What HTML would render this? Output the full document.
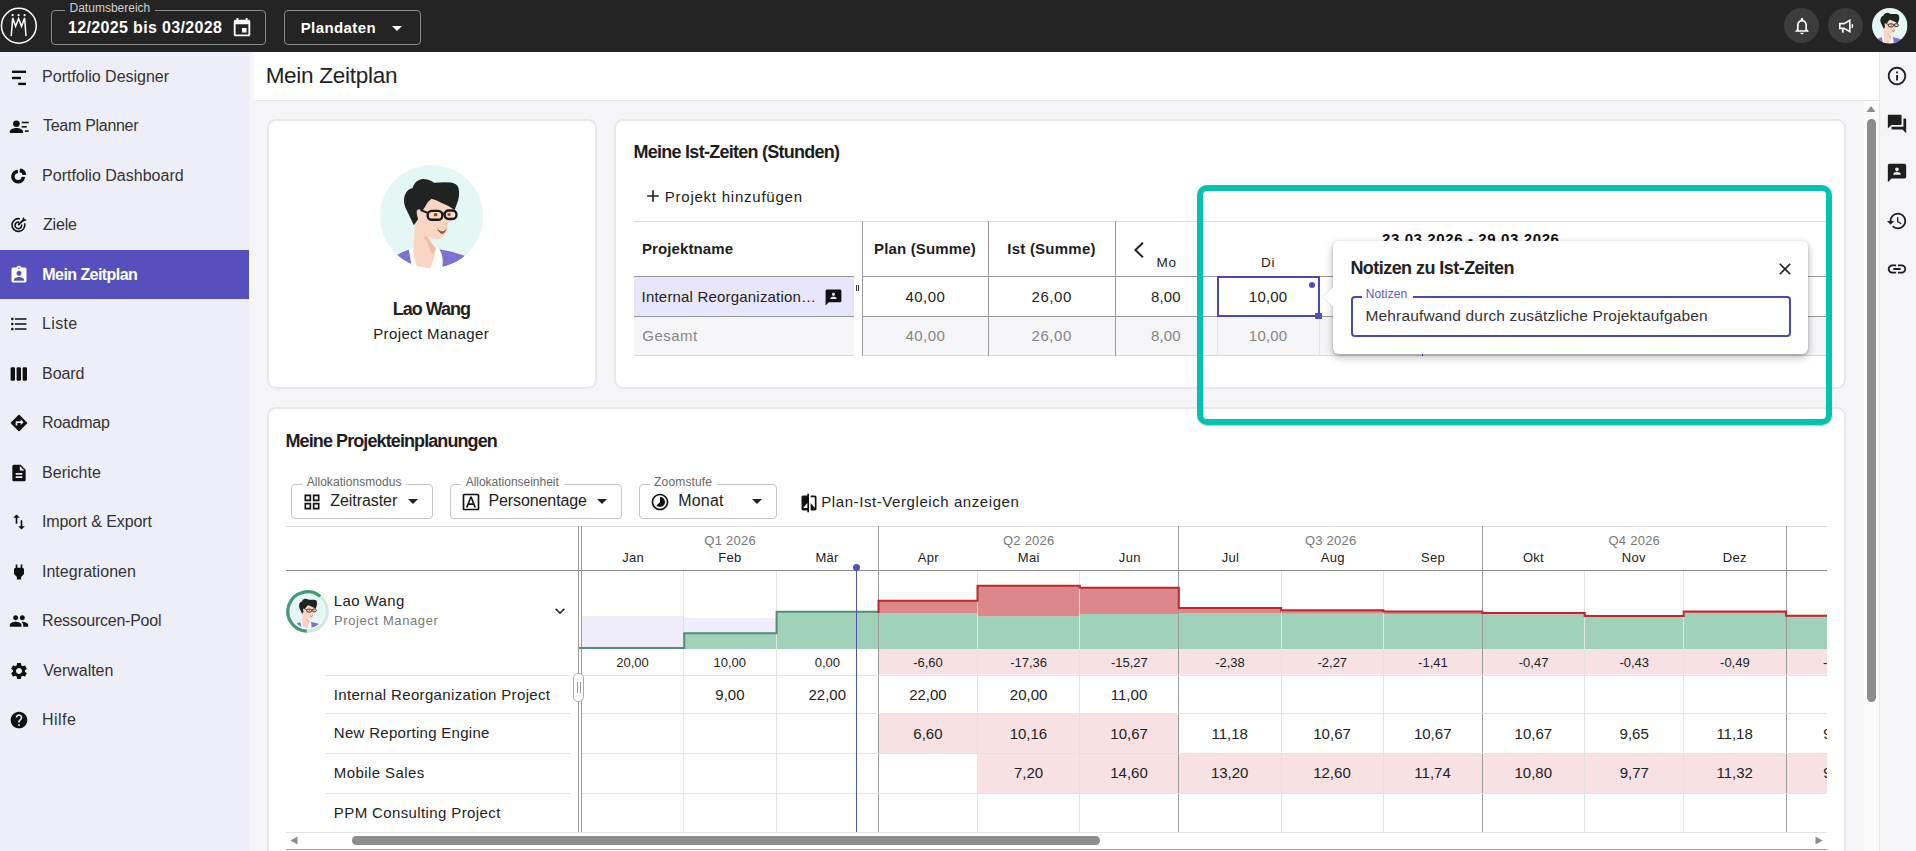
<!DOCTYPE html>
<html lang="de"><head><meta charset="utf-8"><title>Mein Zeitplan</title>
<style>
*{box-sizing:border-box}
html,body{margin:0;padding:0}
body{width:1916px;height:851px;overflow:hidden;position:relative;background:#f5f5f7;font-family:"Liberation Sans",sans-serif;color:#222}
.t{position:absolute;white-space:pre;line-height:1;font-weight:400;margin:0;padding:0;text-decoration:none}
.i{position:absolute;display:block;overflow:visible}
.abs{position:absolute}
#top{position:absolute;left:0;top:0;width:1916px;height:52px;background:#242424}
#side{position:absolute;left:0;top:52px;width:249px;height:799px;background:#eeeef9}
.act{position:absolute;left:0;width:249px;background:#5650be}
#hdr{position:absolute;left:249px;top:52px;width:1630px;height:48px;background:#fff}
#rbar{position:absolute;left:1879px;top:52px;width:37px;height:799px;background:#f5f5f7;border-left:1px solid #e6e6ea}
.card{position:absolute;background:#fff;border:2px solid #e8e8ea;border-radius:9px}
.ob{position:absolute;border:1px solid #8a8a8a;border-radius:4px}
.lb{position:absolute;border:1px solid #c4c4c4;border-radius:4px;background:#fff}
.hl{position:absolute;height:1px}
.vl{position:absolute;width:1px}
</style></head><body>

<svg width="0" height="0" style="position:absolute"><defs>
<clipPath id="avc"><circle cx="50" cy="50" r="50"/></clipPath>
<symbol id="av" viewBox="0 0 100 100">
<g clip-path="url(#avc)">
<rect width="100" height="100" fill="#e5f7f5"/>
<path d="M12 92 L16 87.500 Q22 84 28.500 82 L33 100 L12 100Z" fill="#7b72d3"/>
<path d="M56.500 81.500 Q70 83.500 83 88.500 L88 100 L58 100Z" fill="#7b72d3"/>
<path d="M28 82 L33.500 80.500 L36 100 L31 100Z" fill="#fff"/>
<path d="M53 80 L57.500 81.500 Q62 88 60.500 100 L47 100Z" fill="#fff"/>
<path d="M35 44 L33.500 66 L32.400 82 Q33 94 37 100 L49.500 100 Q52.500 90 54.600 81 Q50 76 46.500 70Z" fill="#f9d5c3"/>
<path d="M45 69 Q49 75.500 54.200 81 Q52.500 84 50.500 87 Q47.500 78 43 70Z" fill="#f4b9a3"/>
<path d="M40 38 Q48 31 52 33 Q62 37 71.500 42.800 L71.800 47 Q70.500 51 69.800 52.600 L67.500 55 Q66.300 56.500 65.200 57.200 L66 59 L65 62 Q64 68 60 71 Q54 73.500 47 69.600 Q40 64 36 56 L35 46Z" fill="#f9d5c3"/>
<path d="M55.500 61.500 Q60 63.500 64.800 61.500 Q63.500 66 60.500 67 Q57 66 55.500 61.500Z" fill="#a94a1c"/>
<path d="M55.500 61.500 Q60 63.500 64.800 61.500 Q62.500 64.600 60 64.400 Q57.500 64 55.500 61.500Z" fill="#fff"/>
<path d="M65.200 57.200 Q63.500 57.800 62.800 56.800" fill="none" stroke="#d99a84" stroke-width=".8"/>
<path d="M32.800 58.500 Q28 48 24.500 41 Q21.500 33 25.500 26.500 Q28.500 22.500 31.500 22.500 Q33.500 15.500 40 13.800 Q46 12.800 52.500 17.200 Q62 16.500 69 17 Q74.500 18 76.200 22 Q78 30 74.500 38 L72.500 43.600 Q66 39 60 36.800 Q54 33.500 50 32.800 Q45.500 36 44 40 Q42 44 39.800 44.200 Q37.500 41.500 35.600 44.500 Q35.500 49 37 52.500 Q35 56 32.800 58.500Z" fill="#1f2423"/>
<g fill="none" stroke="#1a1a1a" stroke-width="2.300">
<rect x="46.300" y="44.600" width="14.200" height="8.600" rx="4"/>
<rect x="62.800" y="44.200" width="11.400" height="8.200" rx="3.800"/>
<path d="M60.500 47h2.300M46.500 46.500 L39.500 43.800" stroke-width="2"/>
</g>
<ellipse cx="54" cy="48.200" rx="1.800" ry="1.500" fill="#8a4a20"/><ellipse cx="67" cy="48" rx="1.600" ry="1.400" fill="#8a4a20"/>
</g>
</symbol></defs></svg>

<header id="top">
<svg class="i" style="left:0;top:7px" width="38" height="38" viewBox="0 0 38 38"><circle cx="18.850" cy="18.750" r="17.400" fill="none" stroke="#fff" stroke-width="1.500"/>
<path d="M11.200 29.100 L12.700 10.900 L15.600 19.300 L18.600 11.600 L21.500 19.300 L24.600 10.900 L26 29.100" fill="none" stroke="#fff" stroke-width="1.500" stroke-linejoin="miter"/>
<circle cx="12.600" cy="8.200" r="1.100" fill="#fff"/><circle cx="18.600" cy="8.200" r="1.100" fill="#fff"/><circle cx="24.600" cy="8.200" r="1.100" fill="#fff"/></svg>
<div class="ob" style="left:51px;top:10px;width:215px;height:35px"></div>
<div class="abs" style="left:65px;top:2px;width:90px;height:14px;background:#242424"></div>
<span class="t" style="left:69.52px;top:2px;font-size:12px;color:#d0d0d0;letter-spacing:0.005px;">Datumsbereich</span>
<span class="t" style="left:67.99px;top:20px;font-size:16px;color:#fff;font-weight:700;letter-spacing:0.351px;">12/2025 bis 03/2028</span>
<svg class="i" style="left:231.00px;top:17.00px" width="22" height="22" viewBox="0 0 24 24" fill="#fff" ><path d="M17 12h-5v5h5v-5zM16 1v2H8V1H6v2H5c-1.110 0-1.990.9-1.990 2L3 19c0 1.100.89 2 2 2h14c1.100 0 2-.9 2-2V5c0-1.100-.9-2-2-2h-1V1h-2zm3 18H5V8h14v11z"/></svg>
<div class="ob" style="left:284px;top:10px;width:137px;height:35px"></div>
<span class="t" style="left:300.70px;top:20px;font-size:15px;color:#fff;font-weight:700;letter-spacing:0.406px;">Plandaten</span>
<svg class="i" style="left:385.00px;top:15.60px" width="24" height="24" viewBox="0 0 24 24" fill="#fff" ><path d="M7 10l5 5 5-5z"/></svg>
<div class="abs" style="left:1784px;top:8px;width:35px;height:35px;border-radius:50%;background:#3c3c3c"></div>
<svg class="i" style="left:1791.50px;top:15.60px" width="20" height="20" viewBox="0 0 24 24" fill="#fff" ><path d="M12 22c1.100 0 2-.9 2-2h-4c0 1.100.9 2 2 2zm6-6v-5c0-3.070-1.630-5.640-4.500-6.320V4c0-.83-.67-1.500-1.500-1.500s-1.500.67-1.500 1.500v.68C7.640 5.360 6 7.920 6 11v5l-2 2v1h16v-1l-2-2zm-2 1H8v-6c0-2.480 1.510-4.500 4-4.500s4 2.020 4 4.500v6z"/></svg>
<div class="abs" style="left:1828px;top:8px;width:35px;height:35px;border-radius:50%;background:#3c3c3c"></div>
<svg class="i" style="left:1836px;top:16px" width="20" height="20" viewBox="0 0 20 20" fill="none" stroke="#fff" stroke-width="1.600"><path d="M3.800 7.600h4.200l5.800-3.200v11.200l-5.800-3.200H3.800z"/><path d="M6.800 12.600v4" stroke-width="1.800"/><path d="M16 8.200q1 1.800 0 3.600" stroke-width="1.400"/></svg>
<svg class="i" style="left:1872px;top:8px" width="35.500" height="35.500"><use href="#av"/></svg>
</header>
<div id="side"></div>
<nav>
<div class="act" style="top:250px;height:49px"></div>
<a class="ni">
<span class="t" style="left:42.09px;top:69px;font-size:16px;color:#333;letter-spacing:-0.011px;">Portfolio Designer</span>
<svg class="i" style="left:9px;top:67.00px" width="20" height="20" viewBox="0 0 20 20" fill="#111"><rect x="3" y="3.600" width="14" height="2.400"/><rect x="3" y="9.800" width="9" height="2.400"/><rect x="9.200" y="15.700" width="7.800" height="2.400"/></svg>
</a>
<a class="ni">
<span class="t" style="left:43.04px;top:118px;font-size:16px;color:#333;letter-spacing:-0.290px;">Team Planner</span>
<svg class="i" style="left:9px;top:115.66px" width="20" height="20" viewBox="0 0 20 20" fill="#111"><circle cx="7.400" cy="7.700" r="3.300"/><path d="M.800 17v-1.600c0-2.300 4.400-3.400 6.600-3.400s6.600 1.100 6.600 3.400V17z"/><rect x="12.700" y="5.700" width="7" height="1.600"/><rect x="12.700" y="10" width="5" height="1.600"/><rect x="15.900" y="14.300" width="3.800" height="1.600"/></svg>
</a>
<a class="ni">
<span class="t" style="left:42.09px;top:168px;font-size:16px;color:#333;letter-spacing:0.007px;">Portfolio Dashboard</span>
<svg class="i" style="left:9px;top:165.92px" width="20" height="20" viewBox="0 0 20 20" fill="none" stroke="#111" stroke-width="3.500"><path d="M14.29 10.87 A5.200 5.200 0 1 1 8.92 5.40"/><path d="M10.79 4.28 A5.200 5.200 0 0 1 15.42 8.91" stroke-width="3.800"/></svg>
</a>
<a class="ni">
<span class="t" style="left:42.89px;top:217px;font-size:16px;color:#333;letter-spacing:-0.140px;">Ziele</span>
<svg class="i" style="left:9px;top:215.38px" width="20" height="20" viewBox="0 0 20 20" fill="none" stroke="#111" stroke-width="1.600"><path d="M15.600 8.300a6.400 6.400 0 1 1-4.600-4.500"/><path d="M12.500 9.400a3.300 3.300 0 1 1-2.300-2.200"/><path d="M9.700 9.600l4.400-4.400" stroke-width="1.700"/><circle cx="9.700" cy="9.600" r="1" fill="#111" stroke="none"/><path d="M13.300 6.400 L14.400 2.600 L15.300 4.500 L17.200 5 Z" fill="#111" stroke-width=".8"/></svg>
</a>
<a class="ni">
<span class="t" style="left:42.33px;top:267px;font-size:16px;color:#fff;font-weight:700;letter-spacing:-0.564px;">Mein Zeitplan</span>
<svg class="i" style="left:9.00px;top:264.84px" width="20" height="20" viewBox="0 0 24 24" fill="#fff" ><path d="M19 3h-4.180C14.400 1.840 13.300 1 12 1c-1.300 0-2.400.84-2.820 2H5c-1.100 0-2 .9-2 2v14c0 1.100.9 2 2 2h14c1.100 0 2-.9 2-2V5c0-1.100-.9-2-2-2zm-7 0c.55 0 1 .45 1 1s-.45 1-1 1-1-.45-1-1 .45-1 1-1zm0 4c1.660 0 3 1.340 3 3s-1.340 3-3 3-3-1.340-3-3 1.340-3 3-3zm6 12H6v-1.400c0-2 4-3.100 6-3.100s6 1.100 6 3.100V19z"/></svg>
</a>
<a class="ni">
<span class="t" style="left:42.09px;top:316px;font-size:16px;color:#333;letter-spacing:0.307px;">Liste</span>
<svg class="i" style="left:9.00px;top:314.30px" width="20" height="20" viewBox="0 0 24 24" fill="#111" ><path d="M4 10.5c-.83 0-1.5.67-1.5 1.5s.67 1.5 1.5 1.5 1.5-.67 1.5-1.5-.67-1.5-1.5-1.5zm0-6c-.83 0-1.5.67-1.5 1.5S3.17 7.5 4 7.5 5.5 6.83 5.5 6 4.83 4.5 4 4.500zm0 12c-.83 0-1.5.68-1.5 1.5s.68 1.5 1.5 1.5 1.5-.68 1.5-1.500-.67-1.500-1.500-1.500zM7 19h14v-2H7v2zm0-6h14v-2H7v2zm0-8v2h14V5H7z"/></svg>
</a>
<a class="ni">
<span class="t" style="left:42.09px;top:366px;font-size:16px;color:#333;letter-spacing:-0.088px;">Board</span>
<svg class="i" style="left:9px;top:363.76px" width="20" height="20" viewBox="0 0 20 20" fill="#111"><rect x="1.600" y="3.300" width="4.400" height="13.400" rx="1.300"/><rect x="7.600" y="3.300" width="4.400" height="13.400" rx="1.300"/><rect x="13.600" y="3.300" width="4.400" height="13.400" rx="1.300"/></svg>
</a>
<a class="ni">
<span class="t" style="left:42.09px;top:415px;font-size:16px;color:#333;letter-spacing:-0.265px;">Roadmap</span>
<svg class="i" style="left:9.00px;top:413.22px" width="20" height="20" viewBox="0 0 24 24" fill="#111" ><path d="M21.71 11.29l-9-9c-.39-.39-1.02-.39-1.41 0l-9 9c-.39.39-.39 1.02 0 1.410l9 9c.39.39 1.020.39 1.410 0l9-9c.39-.38.39-1.010 0-1.410zM14 14.500V12h-4v3H8v-4c0-.55.45-1 1-1h5V7.500l3.500 3.500-3.500 3.500z"/></svg>
</a>
<a class="ni">
<span class="t" style="left:42.09px;top:465px;font-size:16px;color:#333;letter-spacing:0.018px;">Berichte</span>
<svg class="i" style="left:9.00px;top:462.68px" width="20" height="20" viewBox="0 0 24 24" fill="#111" ><path d="M14 2H6c-1.100 0-1.990.9-1.990 2L4 20c0 1.100.89 2 1.990 2H18c1.100 0 2-.9 2-2V8l-6-6zm2 16H8v-2h8v2zm0-4H8v-2h8v2zm-3-5V3.500L18.500 9H13z"/></svg>
</a>
<a class="ni">
<span class="t" style="left:41.92px;top:514px;font-size:16px;color:#333;letter-spacing:-0.075px;">Import &amp; Export</span>
<svg class="i" style="left:9.00px;top:512.14px" width="20" height="20" viewBox="0 0 24 24" fill="#111" ><path d="M9 3L5 6.990h3V14h2V6.990h3L9 3zm7 14.010V10h-2v7.010h-3L15 21l4-3.990h-3z"/></svg>
</a>
<a class="ni">
<span class="t" style="left:41.92px;top:564px;font-size:16px;color:#333;letter-spacing:0.051px;">Integrationen</span>
<svg class="i" style="left:9.00px;top:561.60px" width="20" height="20" viewBox="0 0 24 24" fill="#111" ><path d="M16.010 7L16 3h-2v4h-4V3H8v4h-.010C7 6.990 6 7.990 6 8.990v5.490L9.500 18v3h5v-3l3.500-3.510v-5.500c0-1-1-2-1.990-1.990z"/></svg>
</a>
<a class="ni">
<span class="t" style="left:42.09px;top:613px;font-size:16px;color:#333;letter-spacing:-0.239px;">Ressourcen-Pool</span>
<svg class="i" style="left:9.00px;top:611.06px" width="20" height="20" viewBox="0 0 24 24" fill="#111" ><path d="M16 11c1.660 0 2.990-1.340 2.990-3S17.660 5 16 5c-1.660 0-3 1.340-3 3s1.340 3 3 3zm-8 0c1.660 0 2.990-1.340 2.990-3S9.660 5 8 5C6.340 5 5 6.340 5 8s1.340 3 3 3zm0 2c-2.330 0-7 1.170-7 3.500V19h14v-2.500c0-2.330-4.670-3.500-7-3.500zm8 0c-.29 0-.62.020-.97.050 1.160.84 1.970 1.970 1.970 3.450V19h6v-2.500c0-2.330-4.670-3.500-7-3.500z"/></svg>
</a>
<a class="ni">
<span class="t" style="left:43.33px;top:663px;font-size:16px;color:#333;letter-spacing:-0.032px;">Verwalten</span>
<svg class="i" style="left:9.00px;top:660.52px" width="20" height="20" viewBox="0 0 24 24" fill="#111" ><path d="M19.140 12.940c.040-.3.060-.61.060-.94 0-.32-.020-.64-.070-.94l2.030-1.580c.18-.14.230-.41.120-.61l-1.920-3.320c-.12-.22-.37-.29-.59-.22l-2.390.96c-.5-.38-1.030-.7-1.620-.94l-.36-2.540c-.04-.24-.24-.41-.48-.41h-3.840c-.24 0-.43.170-.47.410l-.36 2.540c-.59.240-1.130.570-1.620.940l-2.390-.96c-.22-.08-.47 0-.59.220L2.740 8.870c-.12.210-.08.470.12.610l2.030 1.580c-.05.3-.09.630-.09.940s.02.640.07.940l-2.030 1.580c-.18.140-.23.410-.12.610l1.920 3.320c.12.220.37.290.59.220l2.390-.96c.5.380 1.030.7 1.620.94l.36 2.540c.05.240.24.410.48.410h3.840c.24 0 .44-.17.470-.41l.36-2.540c.59-.24 1.130-.56 1.620-.94l2.390.96c.22.080.47 0 .59-.22l1.920-3.320c.12-.22.070-.47-.12-.61l-2.010-1.580zM12 15.600c-1.980 0-3.600-1.620-3.600-3.600s1.620-3.600 3.600-3.600 3.600 1.620 3.600 3.600-1.620 3.600-3.600 3.600z"/></svg>
</a>
<a class="ni">
<span class="t" style="left:42.09px;top:712px;font-size:16px;color:#333;letter-spacing:0.454px;">Hilfe</span>
<svg class="i" style="left:9.00px;top:709.98px" width="20" height="20" viewBox="0 0 24 24" fill="#111" ><path d="M12 2C6.480 2 2 6.480 2 12s4.480 10 10 10 10-4.480 10-10S17.520 2 12 2zm1 17h-2v-2h2v2zm2.070-7.750l-.9.920C13.450 12.900 13 13.500 13 15h-2v-.5c0-1.100.45-2.100 1.170-2.830l1.240-1.260c.37-.36.590-.86.590-1.410 0-1.100-.9-2-2-2s-2 .9-2 2H8c0-2.210 1.790-4 4-4s4 1.790 4 4c0 .88-.36 1.680-.93 2.250z"/></svg>
</a>
</nav>
<div id="hdr"></div>
<div class="hl" style="left:256px;top:100px;width:1623px;background:#e4e4e8"></div>
<div class="abs" style="left:249px;top:52px;width:7px;height:48px;background:linear-gradient(90deg,rgba(120,120,160,.10),rgba(120,120,160,0))"></div>
<h1 class="t" style="left:265.65px;top:65px;font-size:22.5px;color:#222;letter-spacing:-0.263px;">Mein Zeitplan</h1>
<div id="rbar"></div>
<aside>
<svg class="i" style="left:1886.00px;top:65.00px" width="22" height="22" viewBox="0 0 24 24" fill="#1f1f1f" ><path d="M11 7h2v2h-2zm0 4h2v6h-2zm1-9C6.480 2 2 6.480 2 12s4.480 10 10 10 10-4.480 10-10S17.520 2 12 2zm0 18c-4.410 0-8-3.590-8-8s3.590-8 8-8 8 3.590 8 8-3.590 8-8 8z"/></svg>
<svg class="i" style="left:1886.00px;top:113.00px" width="22" height="22" viewBox="0 0 24 24" fill="#1f1f1f" ><path d="M21 6h-2v9H6v2c0 .55.45 1 1 1h11l4 4V7c0-.55-.45-1-1-1zm-4 6V3c0-.55-.45-1-1-1H3c-.55 0-1 .45-1 1v14l4-4h10c.55 0 1-.45 1-1z"/></svg>
<svg class="i" style="left:1886.00px;top:161.70px" width="22" height="22" viewBox="0 0 24 24" fill="#1f1f1f" ><path d="M20 2H4.010c-1.100 0-2 .9-2 2L2 22l4-4h14c1.100 0 2-.9 2-2V4c0-1.100-.9-2-2-2zm-8 4c1.100 0 2 .9 2 2s-.9 2-2 2-2-.9-2-2 .9-2 2-2zm4 8H8v-.570c0-.81.48-1.530 1.220-1.850.85-.37 1.790-.58 2.780-.58.990 0 1.930.21 2.780.58.740.32 1.220 1.040 1.220 1.850V14z"/></svg>
<svg class="i" style="left:1885.50px;top:209.50px" width="22" height="22" viewBox="0 0 24 24" fill="#1f1f1f" ><path d="M13 3c-4.970 0-9 4.030-9 9H1l3.890 3.890.07.14L9 12H6c0-3.870 3.130-7 7-7s7 3.130 7 7-3.130 7-7 7c-1.930 0-3.680-.79-4.940-2.060l-1.420 1.420C8.270 19.990 10.510 21 13 21c4.970 0 9-4.030 9-9s-4.030-9-9-9zm-1 5v5l4.280 2.540.72-1.210-3.500-2.080V8H12z"/></svg>
<svg class="i" style="left:1886.00px;top:257.50px" width="22" height="22" viewBox="0 0 24 24" fill="#1f1f1f" ><path d="M3.900 12c0-1.710 1.390-3.100 3.100-3.100h4V7H7c-2.760 0-5 2.240-5 5s2.240 5 5 5h4v-1.900H7c-1.710 0-3.100-1.390-3.100-3.100zM8 13h8v-2H8v2zm9-6h-4v1.900h4c1.710 0 3.100 1.390 3.100 3.100s-1.390 3.100-3.100 3.100h-4V17h4c2.760 0 5-2.240 5-5s-2.240-5-5-5z"/></svg>
</aside>
<div class="abs" style="left:1864px;top:101px;width:15px;height:750px;background:#fafafb"></div>
<svg class="i" style="left:1866px;top:105px" width="10" height="8" viewBox="0 0 10 8"><path d="M5 1 L9.500 7 H.500z" fill="#8c8c8c"/></svg>
<div class="abs" style="left:1866.800px;top:119px;width:8.800px;height:583px;border-radius:4.400px;background:#8c8c8c"></div>
<main>
<section>
<div class="card" style="left:267px;top:119px;width:330px;height:270px"></div>
<svg class="i" style="left:380px;top:164.500px" width="103" height="103"><use href="#av"/></svg>
<h3 class="t" style="left:392.70px;top:300px;font-size:18px;color:#222;font-weight:700;letter-spacing:-1.002px;">Lao Wang</h3>
<span class="t" style="left:373.17px;top:326px;font-size:15px;color:#222;letter-spacing:0.387px;">Project Manager</span>
</section>
<section>
<div class="card" style="left:614px;top:119px;width:1232px;height:270px"></div>
<h2 class="t" style="left:633.50px;top:143px;font-size:18px;color:#1d1d1f;font-weight:700;letter-spacing:-0.736px;">Meine Ist-Zeiten (Stunden)</h2>
<svg class="i" style="left:643.00px;top:186.30px" width="20" height="20" viewBox="0 0 24 24" fill="#222" ><path d="M19 13h-6v6h-2v-6H5v-2h6V5h2v6h6v2z"/></svg>
<span class="t" style="left:664.77px;top:189px;font-size:15px;color:#222;letter-spacing:0.762px;">Projekt hinzufügen</span>
<div class="hl" style="left:634px;top:221px;width:1193px;background:#dcdcdc"></div>
<div class="abs" style="left:634px;top:277px;width:220px;height:39px;background:#e8e6fb"></div>
<div class="abs" style="left:634px;top:317px;width:220px;height:38px;background:#f5f5f7"></div>
<div class="abs" style="left:863px;top:317px;width:964px;height:38px;background:#f5f5f7"></div>
<div class="hl" style="left:634px;top:276px;width:220px;background:#9a9a9a"></div>
<div class="hl" style="left:634px;top:316px;width:220px;background:#9a9a9a"></div>
<div class="hl" style="left:634px;top:355px;width:220px;background:#dcdcdc"></div>
<div class="hl" style="left:862px;top:276px;width:965px;background:#9a9a9a"></div>
<div class="hl" style="left:862px;top:316px;width:965px;background:#9a9a9a"></div>
<div class="hl" style="left:862px;top:355px;width:965px;background:#dcdcdc"></div>
<div class="vl" style="left:862px;top:221px;height:135px;background:#9a9a9a"></div>
<div class="vl" style="left:988px;top:221px;height:135px;background:#9a9a9a"></div>
<div class="vl" style="left:1115px;top:221px;height:135px;background:#9a9a9a"></div>
<div class="vl" style="left:1217px;top:277px;height:78px;background:#e2e2e4"></div>
<div class="vl" style="left:1319px;top:317px;height:38px;background:#e2e2e4"></div>
<div class="abs" style="left:855.500px;top:285px;width:1px;height:6px;background:#333"></div><div class="abs" style="left:857.500px;top:285px;width:1px;height:6px;background:#333"></div>
<span class="t" style="left:642.00px;top:241px;font-size:15px;color:#1d1d1f;font-weight:700;letter-spacing:0.098px;">Projektname</span>
<span class="t" style="left:874.00px;top:241px;font-size:15px;color:#1d1d1f;font-weight:700;letter-spacing:0.157px;">Plan (Summe)</span>
<span class="t" style="left:1007.25px;top:241px;font-size:15px;color:#1d1d1f;font-weight:700;letter-spacing:0.240px;">Ist (Summe)</span>
<svg class="i" style="left:1127px;top:238px" width="24" height="24" viewBox="0 0 24 24" fill="none" stroke="#222" stroke-width="2"><path d="M15.900 4.700 L8.400 12 L15.900 19.300"/></svg>
<span class="t" style="left:1156.39px;top:256px;font-size:13.5px;color:#222;letter-spacing:0.920px;">Mo</span>
<span class="t" style="left:1260.94px;top:256px;font-size:13.5px;color:#222;letter-spacing:0.768px;">Di</span>
<span class="t" style="left:1381.98px;top:231px;font-size:15px;color:#111;font-weight:700;letter-spacing:0.613px;">23.03.2026 - 29.03.2026</span>
<span class="t" style="left:641.62px;top:289px;font-size:15px;color:#222;letter-spacing:0.188px;">Internal Reorganization…</span>
<svg class="i" style="left:824.00px;top:287.50px" width="19" height="19" viewBox="0 0 24 24" fill="#111" ><path d="M20 2H4.010c-1.100 0-2 .9-2 2L2 22l4-4h14c1.100 0 2-.9 2-2V4c0-1.100-.9-2-2-2zm-8 4c1.100 0 2 .9 2 2s-.9 2-2 2-2-.9-2-2 .9-2 2-2zm4 8H8v-.570c0-.81.48-1.530 1.220-1.850.85-.37 1.790-.58 2.780-.58.990 0 1.930.21 2.780.58.740.32 1.220 1.040 1.220 1.850V14z"/></svg>
<span class="t" style="left:905.41px;top:289px;font-size:15px;color:#222;letter-spacing:0.473px;">40,00</span>
<span class="t" style="left:1031.50px;top:289px;font-size:15px;color:#222;letter-spacing:0.576px;">26,00</span>
<span class="t" style="left:1150.95px;top:289px;font-size:15px;color:#222;letter-spacing:0.148px;">8,00</span>
<span class="t" style="left:1248.86px;top:289px;font-size:15px;color:#222;letter-spacing:0.198px;">10,00</span>
<span class="t" style="left:642.25px;top:328px;font-size:15px;color:#858585;letter-spacing:0.470px;">Gesamt</span>
<span class="t" style="left:905.41px;top:328px;font-size:15px;color:#858585;letter-spacing:0.473px;">40,00</span>
<span class="t" style="left:1031.50px;top:328px;font-size:15px;color:#858585;letter-spacing:0.576px;">26,00</span>
<span class="t" style="left:1150.95px;top:328px;font-size:15px;color:#858585;letter-spacing:0.148px;">8,00</span>
<span class="t" style="left:1248.86px;top:328px;font-size:15px;color:#858585;letter-spacing:0.198px;">10,00</span>
<div class="abs" style="left:1217px;top:276px;width:103px;height:41px;border:2px solid #4b47b9"></div>
<div class="abs" style="left:1315px;top:313px;width:7px;height:6px;background:#5650be;border:1px solid #fff;border-width:0 0 0 0"></div>
<div class="abs" style="left:1308.700px;top:282px;width:6.800px;height:6px;border-radius:50%;background:#5650be"></div>
</section>
<section>
<div class="card" style="left:267px;top:407px;width:1579px;height:460px"></div>
<h2 class="t" style="left:285.50px;top:432px;font-size:18px;color:#1d1d1f;font-weight:700;letter-spacing:-0.905px;">Meine Projekteinplanungen</h2>
<div class="lb" style="left:291px;top:484px;width:142px;height:35px"></div>
<div class="abs" style="left:301.7px;top:480px;width:104.3px;height:8px;background:#fff"></div>
<span class="t" style="left:306.68px;top:476px;font-size:12px;color:#666;letter-spacing:0.047px;">Allokationsmodus</span>
<span class="t" style="left:330.29px;top:493px;font-size:16px;color:#222;letter-spacing:-0.066px;">Zeitraster</span>
<svg class="i" style="left:401.00px;top:489.00px" width="24" height="24" viewBox="0 0 24 24" fill="#222" ><path d="M7 10l5 5 5-5z"/></svg>
<svg class="i" style="left:301.50px;top:491.90px" width="20" height="20" viewBox="0 0 24 24" fill="#111" ><path d="M3 3v8h8V3H3zm6 6H5V5h4v4zm-6 4v8h8v-8H3zm6 6H5v-4h4v4zm4-16v8h8V3h-8zm6 6h-4V5h4v4zm-6 4v8h8v-8h-8zm6 6h-4v-4h4v4z"/></svg>
<div class="lb" style="left:450px;top:484px;width:172px;height:35px"></div>
<div class="abs" style="left:460.7px;top:480px;width:103px;height:8px;background:#fff"></div>
<span class="t" style="left:465.68px;top:476px;font-size:12px;color:#666;letter-spacing:-0.017px;">Allokationseinheit</span>
<span class="t" style="left:488.49px;top:493px;font-size:16px;color:#222;letter-spacing:-0.101px;">Personentage</span>
<svg class="i" style="left:590.00px;top:489.00px" width="24" height="24" viewBox="0 0 24 24" fill="#222" ><path d="M7 10l5 5 5-5z"/></svg>
<svg class="i" style="left:461.00px;top:491.90px" width="20" height="20" viewBox="0 0 24 24" fill="#111" ><path d="M9.170 15.500h5.640l1.140 3h2.090l-5.110-13h-1.860l-5.110 13h2.090l1.120-3zM12 7.980l2.070 5.520H9.930L12 7.980zM20 2H4c-1.100 0-2 .9-2 2v16c0 1.100.9 2 2 2h16c1.100 0 2-.9 2-2V4c0-1.100-.9-2-2-2zm0 18H4V4h16v16z"/></svg>
<div class="lb" style="left:639px;top:484px;width:138px;height:35px"></div>
<div class="abs" style="left:649.5px;top:480px;width:67px;height:8px;background:#fff"></div>
<span class="t" style="left:654.12px;top:476px;font-size:12px;color:#666;letter-spacing:0.153px;">Zoomstufe</span>
<span class="t" style="left:678.19px;top:493px;font-size:16px;color:#222;letter-spacing:0.190px;">Monat</span>
<svg class="i" style="left:745.00px;top:489.00px" width="24" height="24" viewBox="0 0 24 24" fill="#222" ><path d="M7 10l5 5 5-5z"/></svg>
<svg class="i" style="left:650.00px;top:492.20px" width="20" height="20" viewBox="0 0 24 24" fill="#111" ><path d="M16.240 7.760C15.070 6.590 13.540 6 12 6v6l-4.240 4.240c2.340 2.340 6.140 2.340 8.490 0 2.340-2.340 2.340-6.140-.010-8.480zM12 2C6.480 2 2 6.480 2 12s4.480 10 10 10 10-4.480 10-10S17.520 2 12 2zm0 18c-4.420 0-8-3.580-8-8s3.580-8 8-8 8 3.580 8 8-3.580 8-8 8z"/></svg>
<svg class="i" style="left:798.50px;top:492.50px" width="20" height="20" viewBox="0 0 24 24" fill="#111" ><path d="M10 3H5c-1.100 0-2 .9-2 2v14c0 1.100.9 2 2 2h5v2h2V1h-2v2zm0 15H5l5-6v6zm9-15h-5v2h5v13l-5-6v9h5c1.100 0 2-.9 2-2V5c0-1.100-.9-2-2-2z"/></svg>
<span class="t" style="left:821.27px;top:494px;font-size:15px;color:#222;letter-spacing:0.577px;">Plan-Ist-Vergleich anzeigen</span>
<div class="hl" style="left:286px;top:526px;width:1541px;background:#dcdcdc"></div>
<div class="hl" style="left:286px;top:570px;width:1541px;background:#8e8e8e"></div>
<svg class="i" style="left:0;top:0" width="1916" height="851" viewBox="0 0 1916 851"><defs><clipPath id="cc"><rect x="579" y="526" width="1248" height="310"/></clipPath></defs><g clip-path="url(#cc)">
<rect x="878.5" y="649" width="948.5" height="25.500" fill="#f7e1e3"/>
<rect x="878.5" y="714" width="300.3" height="39" fill="#f7e1e3"/>
<rect x="977.5" y="754" width="849.5" height="39" fill="#f7e1e3"/>
<rect x="581.5" y="616" width="102.3" height="33" fill="#eeedf9"/>
<rect x="683.8" y="618" width="92.4" height="31" fill="#eeedf9"/>
<rect x="683.8" y="633" width="92.4" height="16" fill="#a0d2ba"/>
<rect x="776.2" y="612" width="102.3" height="37" fill="#a0d2ba"/>
<rect x="878.5" y="613" width="99.0" height="36" fill="#a0d2ba"/>
<rect x="977.5" y="616.2" width="102.3" height="32.799999999999955" fill="#a0d2ba"/>
<rect x="1079.8" y="614" width="99.0" height="35" fill="#a0d2ba"/>
<rect x="1178.8" y="613" width="102.3" height="36" fill="#a0d2ba"/>
<rect x="1281.1" y="613.7" width="102.3" height="35.299999999999955" fill="#a0d2ba"/>
<rect x="1383.4" y="614" width="99.0" height="35" fill="#a0d2ba"/>
<rect x="1482.4" y="614.5" width="102.3" height="34.5" fill="#a0d2ba"/>
<rect x="1584.7" y="617" width="99.0" height="32" fill="#a0d2ba"/>
<rect x="1683.7" y="613" width="102.3" height="36" fill="#a0d2ba"/>
<rect x="1786.0" y="617" width="102.3" height="32" fill="#a0d2ba"/>
<rect x="878.5" y="600.8" width="99.0" height="12.200000000000045" fill="#dc878a"/>
<rect x="977.5" y="585.8" width="102.3" height="30.40000000000009" fill="#dc878a"/>
<rect x="1079.8" y="587.8" width="99.0" height="26.200000000000045" fill="#dc878a"/>
<rect x="1178.8" y="608" width="102.3" height="5" fill="#dc878a"/>
<rect x="1281.1" y="610.3" width="102.3" height="3.400000000000091" fill="#dc878a"/>
<rect x="1383.4" y="611.6" width="99.0" height="2.3999999999999773" fill="#dc878a"/>
<rect x="1482.4" y="613" width="102.3" height="1.5" fill="#dc878a"/>
<rect x="1584.7" y="616.1" width="99.0" height="0.8999999999999773" fill="#dc878a"/>
<rect x="1683.7" y="611.6" width="102.3" height="1.3999999999999773" fill="#dc878a"/>
<rect x="1786.0" y="615.8" width="102.3" height="1.2000000000000455" fill="#dc878a"/>
</g></svg>
<div class="vl" style="left:683.3px;top:571px;height:261px;background:#e2e2e2"></div>
<div class="vl" style="left:775.7px;top:571px;height:261px;background:#e2e2e2"></div>
<div class="vl" style="left:878.0px;top:526px;height:306px;background:#9a9a9a"></div>
<div class="vl" style="left:977.0px;top:571px;height:261px;background:#e2e2e2"></div>
<div class="vl" style="left:1079.3px;top:571px;height:261px;background:#e2e2e2"></div>
<div class="vl" style="left:1178.3px;top:526px;height:306px;background:#9a9a9a"></div>
<div class="vl" style="left:1280.6px;top:571px;height:261px;background:#e2e2e2"></div>
<div class="vl" style="left:1382.9px;top:571px;height:261px;background:#e2e2e2"></div>
<div class="vl" style="left:1481.9px;top:526px;height:306px;background:#9a9a9a"></div>
<div class="vl" style="left:1584.2px;top:571px;height:261px;background:#e2e2e2"></div>
<div class="vl" style="left:1683.2px;top:571px;height:261px;background:#e2e2e2"></div>
<div class="vl" style="left:1785.5px;top:526px;height:306px;background:#9a9a9a"></div>
<div class="vl" style="left:578px;top:526px;height:306px;background:#9a9a9a"></div>
<div class="vl" style="left:581px;top:526px;height:306px;background:#9a9a9a"></div>
<div class="hl" style="left:582px;top:674.5px;width:1245px;background:#e2e2e2"></div>
<div class="hl" style="left:582px;top:713px;width:1245px;background:#e2e2e2"></div>
<div class="hl" style="left:582px;top:753px;width:1245px;background:#e2e2e2"></div>
<div class="hl" style="left:582px;top:793px;width:1245px;background:#e2e2e2"></div>
<div class="hl" style="left:326px;top:674.5px;width:244px;background:#e2e2e2"></div>
<div class="hl" style="left:326px;top:713px;width:244px;background:#e2e2e2"></div>
<div class="hl" style="left:326px;top:753px;width:244px;background:#e2e2e2"></div>
<div class="hl" style="left:326px;top:793px;width:244px;background:#e2e2e2"></div>
<div class="hl" style="left:286px;top:832px;width:1541px;background:#e2e2e2"></div>
<svg class="i" style="left:0;top:0" width="1916" height="851" viewBox="0 0 1916 851"><g clip-path="url(#cc)">
<path d="M578.5 648 H684.2 V633.200 H776.6 V611.800 H878.5" fill="none" stroke="#4f8f72" stroke-width="2"/>
<path d="M878.5 613 V600.8 H977.5 V585.8 H1079.8 V587.8 H1178.8 V608 H1281.1 V610.3 H1383.4 V611.6 H1482.4 V613 H1584.7 V616.1 H1683.7 V611.6 H1786.0 V615.8 H1888.3" fill="none" stroke="#c0272d" stroke-width="2"/>
</g></svg>
<span class="t" style="left:704.31px;top:534px;font-size:13px;color:#777;letter-spacing:0.243px;">Q1 2026</span>
<span class="t" style="left:1002.96px;top:534px;font-size:13px;color:#777;letter-spacing:0.243px;">Q2 2026</span>
<span class="t" style="left:1304.91px;top:534px;font-size:13px;color:#777;letter-spacing:0.243px;">Q3 2026</span>
<span class="t" style="left:1608.51px;top:534px;font-size:13px;color:#777;letter-spacing:0.243px;">Q4 2026</span>
<span class="t" style="left:622.19px;top:551px;font-size:13px;color:#222;letter-spacing:0.299px;">Jan</span>
<span class="t" style="left:718.23px;top:551px;font-size:13px;color:#222;letter-spacing:0.312px;">Feb</span>
<span class="t" style="left:815.41px;top:551px;font-size:13px;color:#222;letter-spacing:0.317px;">Mär</span>
<span class="t" style="left:917.68px;top:551px;font-size:13px;color:#222;letter-spacing:0.300px;">Apr</span>
<span class="t" style="left:1017.80px;top:551px;font-size:13px;color:#222;letter-spacing:0.285px;">Mai</span>
<span class="t" style="left:1118.84px;top:551px;font-size:13px;color:#222;letter-spacing:0.299px;">Jun</span>
<span class="t" style="left:1221.74px;top:551px;font-size:13px;color:#222;letter-spacing:0.233px;">Jul</span>
<span class="t" style="left:1320.76px;top:551px;font-size:13px;color:#222;letter-spacing:0.334px;">Aug</span>
<span class="t" style="left:1420.98px;top:551px;font-size:13px;color:#222;letter-spacing:0.330px;">Sep</span>
<span class="t" style="left:1522.89px;top:551px;font-size:13px;color:#222;letter-spacing:0.293px;">Okt</span>
<span class="t" style="left:1621.80px;top:551px;font-size:13px;color:#222;letter-spacing:0.330px;">Nov</span>
<span class="t" style="left:1722.76px;top:551px;font-size:13px;color:#222;letter-spacing:0.321px;">Dez</span>
<span class="t" style="left:616.31px;top:656px;font-size:13px;color:#222;">20,00</span>
<span class="t" style="left:713.49px;top:656px;font-size:13px;color:#222;">10,00</span>
<span class="t" style="left:814.70px;top:656px;font-size:13px;color:#222;">0,00</span>
<span class="t" style="left:913.15px;top:656px;font-size:13px;color:#222;">-6,60</span>
<span class="t" style="left:1010.22px;top:656px;font-size:13px;color:#222;">-17,36</span>
<span class="t" style="left:1110.91px;top:656px;font-size:13px;color:#222;">-15,27</span>
<span class="t" style="left:1215.13px;top:656px;font-size:13px;color:#222;">-2,38</span>
<span class="t" style="left:1317.47px;top:656px;font-size:13px;color:#222;">-2,27</span>
<span class="t" style="left:1418.11px;top:656px;font-size:13px;color:#222;">-1,41</span>
<span class="t" style="left:1518.77px;top:656px;font-size:13px;color:#222;">-0,47</span>
<span class="t" style="left:1619.38px;top:656px;font-size:13px;color:#222;">-0,43</span>
<span class="t" style="left:1720.05px;top:656px;font-size:13px;color:#222;">-0,49</span>
<span class="t" style="left:715.34px;top:687px;font-size:15px;color:#222;">9,00</span>
<span class="t" style="left:808.50px;top:687px;font-size:15px;color:#222;">22,00</span>
<span class="t" style="left:909.15px;top:687px;font-size:15px;color:#222;">22,00</span>
<span class="t" style="left:1009.80px;top:687px;font-size:15px;color:#222;">20,00</span>
<span class="t" style="left:1110.81px;top:687px;font-size:15px;color:#222;">11,00</span>
<span class="t" style="left:913.31px;top:726px;font-size:15px;color:#222;">6,60</span>
<span class="t" style="left:1009.64px;top:726px;font-size:15px;color:#222;">10,16</span>
<span class="t" style="left:1110.34px;top:726px;font-size:15px;color:#222;">10,67</span>
<span class="t" style="left:1211.49px;top:726px;font-size:15px;color:#222;">11,18</span>
<span class="t" style="left:1313.29px;top:726px;font-size:15px;color:#222;">10,67</span>
<span class="t" style="left:1413.94px;top:726px;font-size:15px;color:#222;">10,67</span>
<span class="t" style="left:1514.59px;top:726px;font-size:15px;color:#222;">10,67</span>
<span class="t" style="left:1619.57px;top:726px;font-size:15px;color:#222;">9,65</span>
<span class="t" style="left:1716.39px;top:726px;font-size:15px;color:#222;">11,18</span>
<span class="t" style="left:1013.96px;top:765px;font-size:15px;color:#222;">7,20</span>
<span class="t" style="left:1110.25px;top:765px;font-size:15px;color:#222;">14,60</span>
<span class="t" style="left:1210.90px;top:765px;font-size:15px;color:#222;">13,20</span>
<span class="t" style="left:1313.20px;top:765px;font-size:15px;color:#222;">12,60</span>
<span class="t" style="left:1414.34px;top:765px;font-size:15px;color:#222;">11,74</span>
<span class="t" style="left:1514.50px;top:765px;font-size:15px;color:#222;">10,80</span>
<span class="t" style="left:1619.63px;top:765px;font-size:15px;color:#222;">9,77</span>
<span class="t" style="left:1716.44px;top:765px;font-size:15px;color:#222;">11,32</span>
<div class="abs" style="left:1790px;top:650px;width:37px;height:182px;overflow:hidden">
<span class="t" style="left:32.92px;top:6px;font-size:13px;color:#222;">-0,5</span>
<span class="t" style="left:33.30px;top:76px;font-size:15px;color:#222;">9,65</span>
<span class="t" style="left:33.30px;top:115px;font-size:15px;color:#222;">9,77</span>
</div>
<div class="vl" style="left:856px;top:567px;height:265px;background:#5650be"></div>
<div class="abs" style="left:853px;top:563.500px;width:7px;height:7px;border-radius:50%;background:#5650be"></div>
<svg class="i" style="left:286.100px;top:589.500px" width="43" height="43" viewBox="0 0 43 43"><circle cx="21.500" cy="21.500" r="19.700" fill="none" stroke="#cdeae0" stroke-width="3.200"/><path d="M34.160 6.410 A19.700 19.700 0 1 0 20.800 41.200" fill="none" stroke="#3f9b78" stroke-width="3.200"/></svg>
<svg class="i" style="left:290.600px;top:594px" width="34" height="34"><use href="#av"/></svg>
<span class="t" style="left:333.87px;top:593px;font-size:15px;color:#222;letter-spacing:0.382px;">Lao Wang</span>
<span class="t" style="left:334.03px;top:614px;font-size:13px;color:#7a7a7a;letter-spacing:0.600px;">Project Manager</span>
<svg class="i" style="left:549.90px;top:600.80px" width="20" height="20" viewBox="0 0 24 24" fill="#222" ><path d="M16.590 8.590L12 13.170 7.410 8.590 6 10l6 6 6-6z"/></svg>
<span class="t" style="left:333.72px;top:687px;font-size:15px;color:#222;letter-spacing:0.345px;">Internal Reorganization Project</span>
<span class="t" style="left:333.87px;top:725px;font-size:15px;color:#222;letter-spacing:0.285px;">New Reporting Engine</span>
<span class="t" style="left:333.87px;top:765px;font-size:15px;color:#222;letter-spacing:0.409px;">Mobile Sales</span>
<span class="t" style="left:333.87px;top:805px;font-size:15px;color:#222;letter-spacing:0.383px;">PPM Consulting Project</span>
<div class="abs" style="left:573.300px;top:673.200px;width:10.300px;height:28.500px;border:1px solid #aaa;border-radius:5.100px;background:#fff"></div>
<div class="abs" style="left:577px;top:682px;width:1px;height:10.500px;background:#999"></div><div class="abs" style="left:579.800px;top:682px;width:1px;height:10.500px;background:#999"></div>
<svg class="i" style="left:290px;top:836px" width="8" height="9" viewBox="0 0 8 9"><path d="M.500 4.500 L7.500 .500 V8.500z" fill="#8c8c8c"/></svg>
<svg class="i" style="left:1815px;top:836px" width="8" height="9" viewBox="0 0 8 9"><path d="M7.500 4.500 L.500 .500 V8.500z" fill="#8c8c8c"/></svg>
<div class="abs" style="left:352px;top:836.400px;width:747.500px;height:8.500px;border-radius:4.250px;background:#8c8c8c"></div>
<div class="hl" style="left:286px;top:848.500px;width:1541px;background:#9a9a9a"></div>
</section>
</main>
<div role="dialog">
<div class="abs" style="left:1333px;top:241px;width:474.500px;height:112.800px;background:#fff;border-radius:6px;box-shadow:0 3px 8px rgba(0,0,0,.28),0 1px 3px rgba(0,0,0,.18)"></div>
<svg class="i" style="left:1321px;top:285px" width="13" height="24" viewBox="0 0 13 24"><path d="M13 1 L1.500 12 L13 23z" fill="#fff"/><path d="M12.500 1.500 L1.500 12 L12.500 22.500" fill="none" stroke="#e3e3e3" stroke-width="1"/></svg>
<h2 class="t" style="left:1350.40px;top:259px;font-size:18px;color:#222;font-weight:700;letter-spacing:-0.549px;">Notizen zu Ist-Zeiten</h2>
<svg class="i" style="left:1775.00px;top:258.50px" width="20" height="20" viewBox="0 0 24 24" fill="#222" ><path d="M19 6.410L17.590 5 12 10.590 6.410 5 5 6.410 10.590 12 5 17.590 6.410 19 12 13.410 17.590 19 19 17.590 13.410 12z"/></svg>
<div class="abs" style="left:1351px;top:296px;width:440px;height:40.500px;border:2px solid #4b47b9;border-radius:4px"></div>
<div class="abs" style="left:1362px;top:294px;width:51px;height:5px;background:#fff"></div>
<span class="t" style="left:1365.72px;top:288px;font-size:12px;color:#5b55c8;letter-spacing:0.146px;">Notizen</span>
<span class="t" style="left:1365.43px;top:308px;font-size:15.5px;color:#333;letter-spacing:0.161px;">Mehraufwand durch zusätzliche Projektaufgaben</span>
</div>
<div class="abs" style="left:1422px;top:354px;width:1px;height:2px;background:#3a36a8"></div>
<div class="abs" style="left:1197px;top:184.500px;width:635px;height:240.500px;border:6px solid #02c2b2;border-top-width:6.500px;border-radius:10px;box-shadow:0 1px 1px rgba(80,30,30,.25)"></div>
</body></html>
